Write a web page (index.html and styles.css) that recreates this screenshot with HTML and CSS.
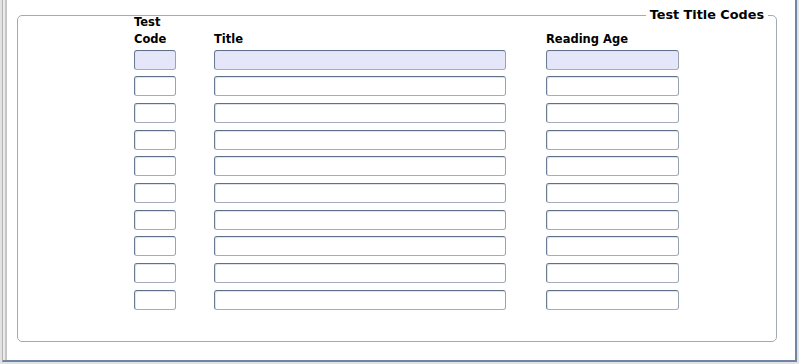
FILE: index.html
```html
<!DOCTYPE html>
<html>
<head>
<meta charset="utf-8">
<link rel="stylesheet" href="styles.css">
</head>
<body>
<div class="frame">
  <div class="panel">
    <div class="group">
      <span class="legend">Test Title Codes</span>
      <div class="grid">
        <div class="hdr">Test<br>Code</div>
        <div class="hdr">Title</div>
        <div class="hdr">Reading Age</div>

        <input class="fld first" type="text"><input class="fld first" type="text"><input class="fld first" type="text">
        <input class="fld" type="text"><input class="fld" type="text"><input class="fld" type="text">
        <input class="fld" type="text"><input class="fld" type="text"><input class="fld" type="text">
        <input class="fld" type="text"><input class="fld" type="text"><input class="fld" type="text">
        <input class="fld" type="text"><input class="fld" type="text"><input class="fld" type="text">
        <input class="fld" type="text"><input class="fld" type="text"><input class="fld" type="text">
        <input class="fld" type="text"><input class="fld" type="text"><input class="fld" type="text">
        <input class="fld" type="text"><input class="fld" type="text"><input class="fld" type="text">
        <input class="fld" type="text"><input class="fld" type="text"><input class="fld" type="text">
        <input class="fld" type="text"><input class="fld" type="text"><input class="fld" type="text">
      </div>
    </div>
  </div>
</div>
</body>
</html>
```
FILE: styles.css
```css
html, body {
  margin: 0;
  padding: 0;
}
body {
  background: #e2e2e2;
  width: 799px;
  height: 364px;
  overflow: hidden;
  font-family: "DejaVu Sans", "Liberation Sans", sans-serif;
}
.frame {
  margin-left: 2px;
  width: 795px;
  height: 362px;
  box-sizing: border-box;
  display: flex;
  background: #ececec;
  border-left: 1px solid #b4b4b4;
  border-right: 2px solid #6f86a3;
  border-bottom: 2px solid #6f86a3;
  padding-left: 2px;
}
.panel {
  flex: 1;
  background: #ffffff;
  border-left: 2px solid #c6c6c6;
  padding: 15px 0 0 10px;
}
.group {
  position: relative;
  width: 760px;
  height: 327px;
  box-sizing: border-box;
  border: 1px solid #a3aab3;
  border-radius: 5px;
}
.legend {
  position: absolute;
  top: -9px;
  right: 8px;
  padding: 0 4px;
  background: #ffffff;
  font-weight: bold;
  font-size: 12.8px;
  line-height: 16px;
  color: #000;
}
.grid {
  display: grid;
  grid-template-columns: 42px 292px 134px;
  column-gap: 38px;
  row-gap: 6.67px;
  margin-left: 116px;
  margin-top: -2px;
}
.grid .hdr:nth-child(3) {
  margin-left: 2px;
}
.hdr {
  font-weight: bold;
  font-size: 11.5px;
  line-height: 17px;
  color: #000;
  align-self: end;
  margin-bottom: -5px;
  white-space: nowrap;
}
.fld {
  display: block;
  box-sizing: border-box;
  height: 20px;
  width: 100%;
  margin: 0;
  padding: 0 3px;
  background: #ffffff;
  border: 1px solid #7688a0;
  border-top-color: #5f718a;
  border-left-color: #6a7c94;
  border-bottom-color: #a3acb8;
  border-right-color: #9aa4b1;
  border-radius: 3px;
  box-shadow: inset 1px 1px 0 #dfe3ea;
  outline: none;
}
.fld.first {
  background: #e6e6fa;
}
.grid .fld:nth-child(3n+3) {
  margin-left: 2px;
  width: 133px;
}
```
